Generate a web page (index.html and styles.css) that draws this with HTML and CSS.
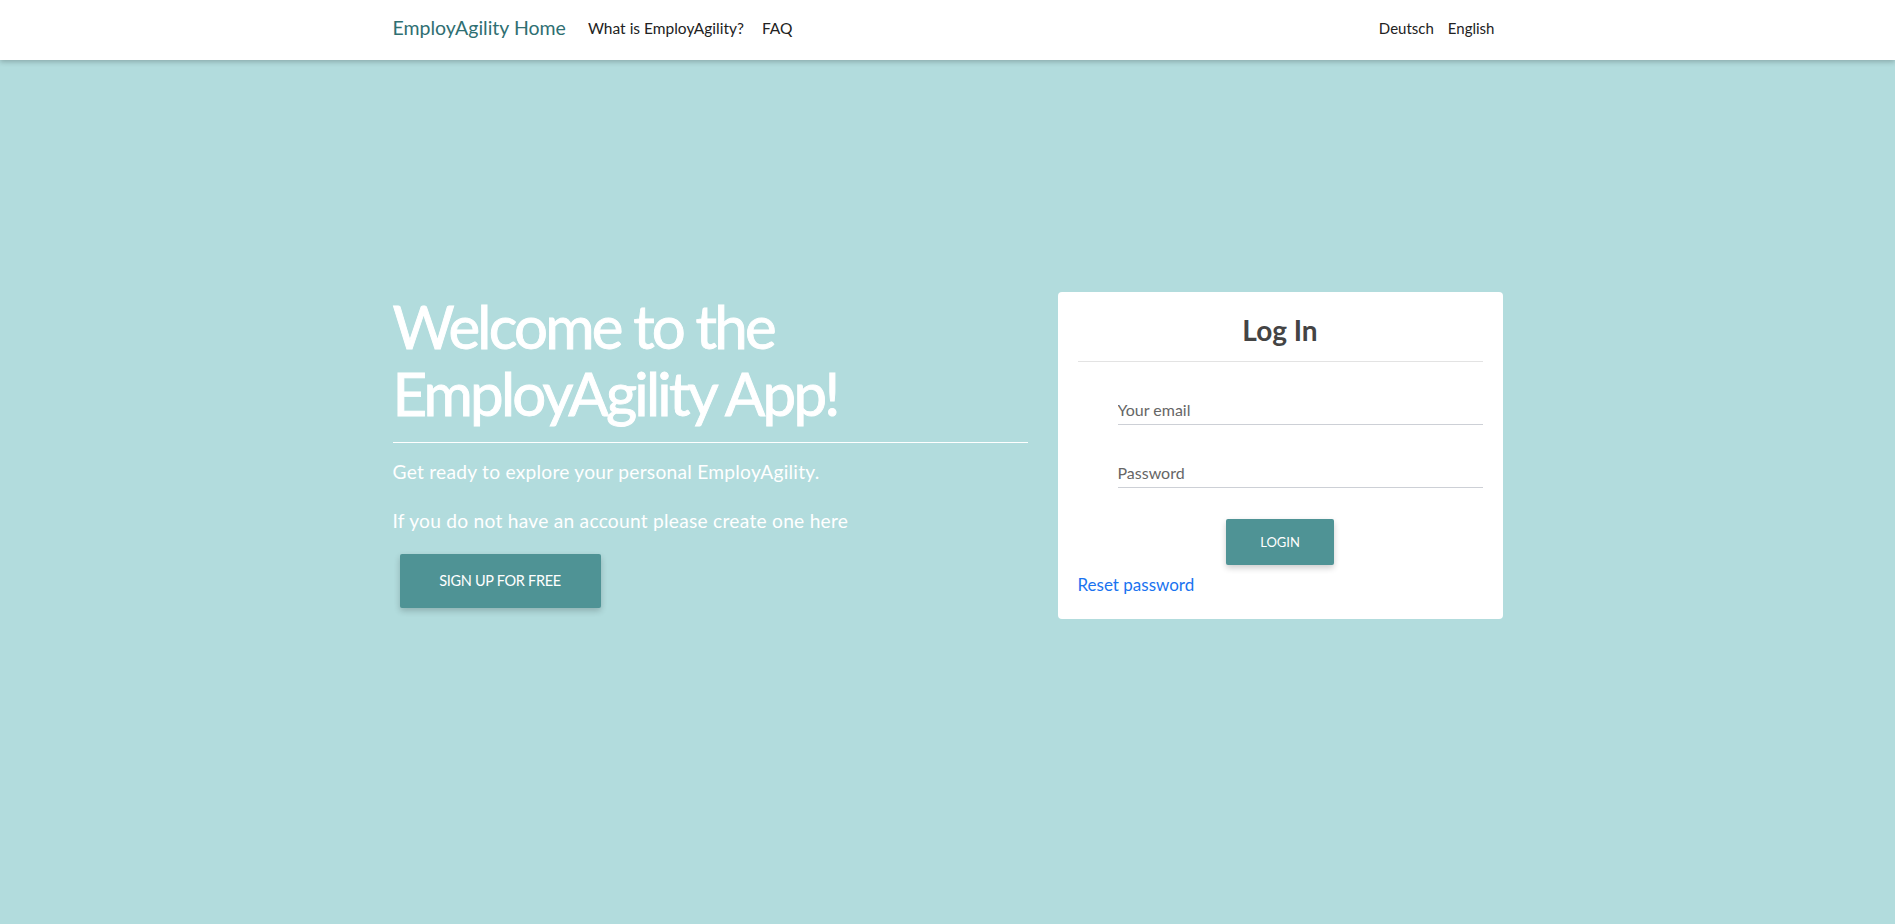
FILE: index.html
```html
<!DOCTYPE html>
<html lang="en">
<head>
<meta charset="utf-8">
<title>EmployAgility</title>
<link rel="stylesheet" href="styles.css">
</head>
<body>
<nav class="navbar">
  <div class="container nav-inner">
    <a class="brand" href="#">EmployAgility Home</a>
    <ul class="nav-links">
      <li><a href="#">What is EmployAgility?</a></li>
      <li><a href="#">FAQ</a></li>
    </ul>
    <ul class="nav-links lang">
      <li><a href="#">Deutsch</a></li>
      <li><a href="#">English</a></li>
    </ul>
  </div>
</nav>
<main class="main">
  <div class="container row">
    <section class="intro">
      <h1 class="title">Welcome to the EmployAgility App!</h1>
      <hr class="intro-rule">
      <p class="lead">Get ready to explore your personal EmployAgility.</p>
      <p class="lead">If you do not have an account please create one here</p>
      <a class="btn btn-signup" href="#">SIGN UP FOR FREE</a>
    </section>
    <section class="login-col">
      <div class="card">
        <h2 class="card-title">Log In</h2>
        <hr class="card-rule">
        <form class="form">
          <input class="field" type="email" placeholder="Your email">
          <input class="field" type="password" placeholder="Password">
          <div class="btn-wrap"><button class="btn btn-login" type="button">LOGIN</button></div>
        </form>
        <a class="reset" href="#">Reset password</a>
      </div>
    </section>
  </div>
</main>
</body>
</html>
```
FILE: styles.css
```css
* { box-sizing: border-box; }
html, body { margin: 0; height: 100%; }
body {
  font-family: Lato, "Liberation Sans", sans-serif;
  background: #b2dcdd;
  color: #222;
}
a { text-decoration: none; }
.container {
  width: 1140px;
  margin: 0 auto;
  padding: 0 15px;
}
.navbar {
  background: #fff;
  height: 60px;
  box-shadow: 0 2px 5px rgba(0, 0, 0, 0.22);
  position: relative;
  z-index: 2;
}
.nav-inner {
  display: flex;
  align-items: center;
  height: 60px;
  padding-bottom: 5px;
}
.brand {
  font-size: 19.5px;
  color: #2f6f72;
  margin-right: 22px;
}
.nav-links {
  display: flex;
  list-style: none;
  margin: 0;
  padding: 0;
  gap: 18px;
}
.nav-links a {
  color: #222;
  font-size: 15.5px;
}
.lang {
  margin-left: auto;
  gap: 14px;
  padding-right: 8px;
}
.lang a { font-size: 15px; }
.main {
  padding-top: 232px;
}
.row {
  display: flex;
  align-items: flex-start;
  gap: 30px;
}
.intro {
  flex: 0 0 635px;
}
.title {
  color: #fff;
  font-size: 60px;
  font-weight: 400;
  line-height: 67px;
  margin: 0;
  letter-spacing: -2.8px;
  -webkit-text-stroke: 0.9px #fff;
  padding-top: 1px;
}
.intro-rule {
  border: 0;
  border-top: 1px solid #fff;
  margin: 15px 0 17px;
}
.lead {
  color: #fff;
  font-size: 19.2px;
  letter-spacing: 0.25px;
  margin: 0 0 26px;
  line-height: 23px;
}
.btn {
  display: inline-block;
  background: #4f9395;
  color: #fff;
  border: 0;
  border-radius: 2px;
  font-family: inherit;
  box-shadow: 0 3px 6px rgba(0, 0, 0, 0.2);
  text-align: center;
}
.btn-signup {
  margin-left: 7px;
  margin-top: -4px;
  width: 201px;
  height: 54px;
  line-height: 54px;
  font-size: 14.5px;
  letter-spacing: -0.3px;
}
.login-col {
  flex: 0 0 445px;
}
.card {
  background: #fff;
  border-radius: 4px;
  padding: 20px 20px 24px;
}
.card-title {
  margin: 0;
  text-align: center;
  font-size: 28px;
  font-weight: 700;
  color: #444;
  line-height: 36px;
}
.card-rule {
  border: 0;
  border-top: 1px solid #e3e3e3;
  margin: 13px 0 0;
}
.form {
  padding-left: 40px;
  display: flex;
  flex-direction: column;
}
.field {
  border: 0;
  border-bottom: 1px solid #cdd0d6;
  outline: none;
  font-family: inherit;
  font-size: 16px;
  color: #333;
  padding: 5px 0 0;
  margin-top: 28px;
  height: 35px;
  display: block;
  width: 100%;
}
.field::placeholder { color: #666; }
.btn-wrap {
  margin-top: 31px;
  margin-left: -40px;
  display: flex;
  justify-content: center;
}
.btn-login {
  width: 108px;
  height: 46px;
  font-size: 13px;
}
.reset {
  display: block;
  margin-top: 9px;
  color: #1a73f0;
  font-size: 17px;
}
```
